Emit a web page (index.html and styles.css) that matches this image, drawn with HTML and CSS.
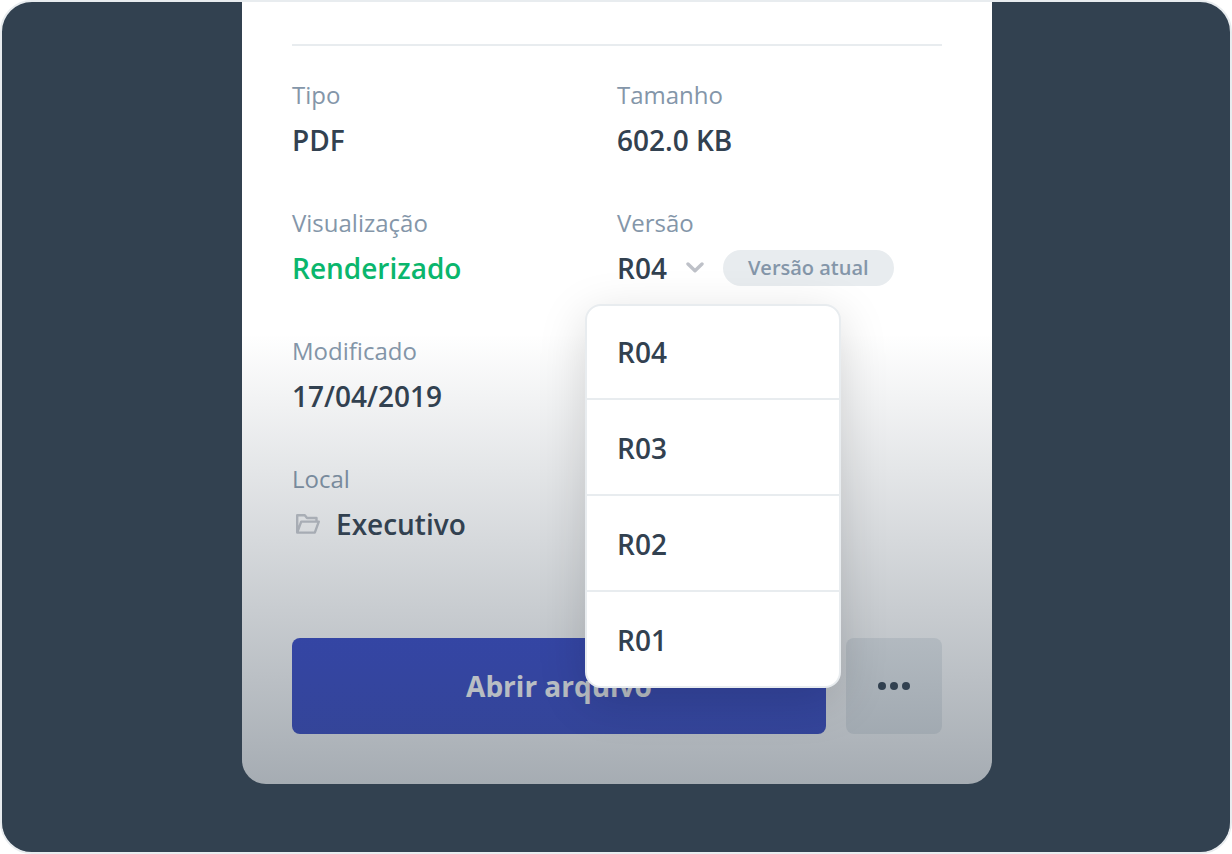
FILE: index.html
```html
<!DOCTYPE html>
<html lang="pt-BR">
<head>
<meta charset="utf-8">
<meta name="viewport" content="width=device-width, initial-scale=1">
<title>Detalhes do arquivo</title>
<link rel="stylesheet" href="styles.css">
</head>
<body>
<main class="frame">
  <section class="card">
    <dl class="details">
      <div class="field"><dt>Tipo</dt><dd>PDF</dd></div>
      <div class="field"><dt>Tamanho</dt><dd>602.0 KB</dd></div>
      <div class="field"><dt>Visualização</dt><dd class="success">Renderizado</dd></div>
      <div class="field version">
        <dt>Versão</dt>
        <dd class="version-row">
          <button class="version-toggle" type="button" aria-haspopup="menu" aria-expanded="true">
            <span>R04</span>
            <svg class="chevron" viewBox="0 0 18 12" aria-hidden="true"><path d="M2 2 9 8.800l7-6.800"/></svg>
          </button>
          <span class="badge">Versão atual</span>
          <span class="menu" role="menu">
            <button type="button" role="menuitem">R04</button>
            <button type="button" role="menuitem">R03</button>
            <button type="button" role="menuitem">R02</button>
            <button type="button" role="menuitem">R01</button>
          </span>
        </dd>
      </div>
      <div class="field wide"><dt>Modificado</dt><dd>17/04/2019</dd></div>
      <div class="field wide">
        <dt>Local</dt>
        <dd class="place">
          <svg class="folder" viewBox="0 0 24 20" aria-hidden="true"><path d="M1.200 18.600V1.200H8.800L11 4H20.500V7.600M1.200 18.600 5.200 7.600H22.800L18.800 18.600Z"/></svg>
          <span>Executivo</span>
        </dd>
      </div>
    </dl>
    <div class="actions">
      <button class="open" type="button">Abrir arquivo</button>
      <button class="more" type="button" aria-label="Mais opções">
        <svg viewBox="0 0 32 8" aria-hidden="true"><circle cx="4" cy="4" r="4"/><circle cx="16" cy="4" r="4"/><circle cx="28" cy="4" r="4"/></svg>
      </button>
    </div>
  </section>
</main>
</body>
</html>
```
FILE: styles.css
```css
:root {
  --ink: #324150;
  --line: #e8ecef;
  --muted: #8496a9;
}

* {
  box-sizing: border-box;
}

body {
  margin: 0;
  background: #fff;
  color: var(--ink);
  font-family: "Open Sans", "Noto Sans", sans-serif;
}

button {
  margin: 0;
  padding: 0;
  border: 0;
  background: none;
  color: inherit;
  font: inherit;
  cursor: pointer;
}

.frame {
  position: relative;
  min-height: 100vh;
  padding: 0 238px 68px 240px;
  border: 2px solid var(--line);
  border-radius: 32px;
  background: var(--ink);
  overflow: hidden;
}

/* Fade that darkens the lower part of the card */
.frame::after {
  content: "";
  position: absolute;
  inset: 0;
  z-index: 1;
  background: linear-gradient(rgba(50, 65, 80, 0) 39%, rgba(50, 65, 80, 0.5) 100%);
  pointer-events: none;
}

.card {
  padding: 42px 50px 50px;
  border-radius: 0 0 24px 24px;
  background: #fff;
}

.details {
  display: grid;
  grid-template-columns: 1fr 1fr;
  row-gap: 47px;
  margin: 0;
  padding-top: 31px;
  border-top: 2px solid var(--line);
}

.field {
  display: grid;
  gap: 9px;
  line-height: 36px;
}

.wide {
  grid-column: 1 / -1;
}

.field dt {
  color: var(--muted);
  font-size: 24px;
}

.field dd {
  margin: 0;
  font-size: 28px;
  font-weight: 600;
}

.field .success {
  color: #0ab66d;
}

.field .version-row {
  position: relative;
  display: flex;
  align-items: center;
  gap: 19px;
}

.version-toggle {
  display: flex;
  align-items: center;
  gap: 19px;
}

.chevron {
  width: 18px;
  height: 12px;
  fill: none;
  stroke: #bec1c8;
  stroke-width: 3.4;
  stroke-linecap: round;
  stroke-linejoin: round;
}

.badge {
  padding: 0 25px;
  border-radius: 18px;
  background: var(--line);
  color: var(--muted);
  font-size: 20px;
}

.menu {
  position: absolute;
  top: 54px;
  left: -32px;
  z-index: 2;
  display: flex;
  flex-direction: column;
  width: 256px;
  border: 2px solid var(--line);
  border-radius: 16px;
  background: #fff;
  box-shadow: 0 12px 48px rgba(0, 0, 0, 0.15);
}

.menu button {
  padding: 30px 30px 28px;
  border-top: 2px solid var(--line);
  text-align: left;
}

.menu button:first-child {
  padding-top: 28px;
  border-top: 0;
}

.place {
  display: flex;
  align-items: center;
  gap: 16px;
  padding-left: 4px;
}

.folder {
  width: 24px;
  height: 20px;
  fill: none;
  stroke: #c2c5cb;
  stroke-width: 2.4;
  stroke-linejoin: round;
}

.actions {
  display: flex;
  gap: 20px;
  margin-top: 96px;
}

.open,
.more {
  height: 96px;
  border-radius: 8px;
}

.open {
  flex: 1;
  background: #3547c7;
  color: #fff;
  font-size: 28px;
  font-weight: 700;
}

.more {
  display: grid;
  place-items: center;
  width: 96px;
  background: var(--line);
}

.more svg {
  width: 32px;
  height: 8px;
  fill: var(--ink);
}
```
